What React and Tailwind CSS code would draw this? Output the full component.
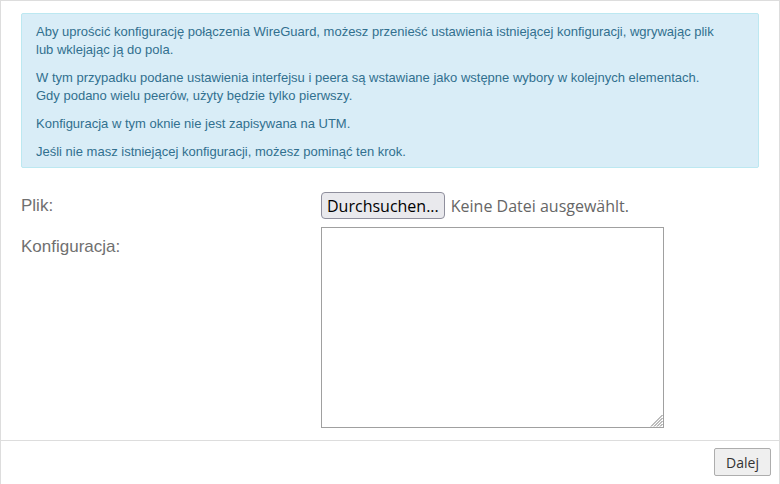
import React from 'react'

const INFO = [
  [
    'Aby uprościć konfigurację połączenia WireGuard, możesz przenieść ustawienia istniejącej konfiguracji, wgrywając plik',
    'lub wklejając ją do pola.',
  ],
  [
    'W tym przypadku podane ustawienia interfejsu i peera są wstawiane jako wstępne wybory w kolejnych elementach.',
    'Gdy podano wielu peerów, użyty będzie tylko pierwszy.',
  ],
  ['Konfiguracja w tym oknie nie jest zapisywana na UTM.'],
  ['Jeśli nie masz istniejącej konfiguracji, możesz pominąć ten krok.'],
]

function ResizeGrip() {
  // hatched corner drawn by the browser on resizable textareas
  return (
    <svg width="14" height="14" viewBox="0 0 14 14" className="absolute right-0 bottom-0">
      <g stroke="#7a7a7a" strokeWidth="1">
        <line x1="2" y1="13.5" x2="13.5" y2="2" />
        <line x1="5" y1="13.5" x2="13.5" y2="5" />
        <line x1="8" y1="13.5" x2="13.5" y2="8" />
        <line x1="11" y1="13.5" x2="13.5" y2="11" />
      </g>
    </svg>
  )
}

export default function App() {
  return (
    <div className="w-[780px] h-[484px] bg-white border-l border-t border-r border-[#dddddd] flex flex-col font-['Liberation_Sans',Arial,sans-serif]">
      <div className="px-5 pt-3">
        <div className="bg-[#d9edf7] border border-[#bce8f1] rounded-[2px] px-[14px] pt-[9px] pb-[6px] text-[13px] leading-[18px] text-[#31708f]">
          {INFO.map((lines, i) => (
            <p key={i} className={i < INFO.length - 1 ? 'mb-[10px]' : ''}>
              {lines.map((l, j) => (
                <span key={j} className="block">{l}</span>
              ))}
            </p>
          ))}
        </div>
      </div>

      <div className="px-5 pt-[24px] pb-3">
        <div className="flex items-center">
          <label className="w-[300px] text-[17px] text-[#707070]">Plik:</label>
          <div className="flex items-center gap-[6px] font-['Open_Sans',sans-serif] text-[16px]">
            <button className="h-[27px] px-[5px] bg-[#e9e9ed] border border-[#8f8f9d] rounded-[4px] text-black leading-none">
              Durchsuchen...
            </button>
            <span className="text-[#666666]">Keine Datei ausgewählt.</span>
          </div>
        </div>
        <div className="flex mt-[8px]">
          <label className="w-[300px] text-[17px] text-[#707070] pt-[7px]">Konfiguracja:</label>
          <div className="relative w-[343px] h-[201px] border border-[#a0a0a0] bg-white">
            <ResizeGrip />
          </div>
        </div>
      </div>

      <div className="border-t border-[#dddddd] flex justify-end px-2 pt-[7px]">
        <button className="w-[57px] h-[28px] bg-[#efefef] border border-[#adadad] rounded-[2px] text-[14px] text-[#333333] font-['Open_Sans',sans-serif]">
          Dalej
        </button>
      </div>
    </div>
  )
}
